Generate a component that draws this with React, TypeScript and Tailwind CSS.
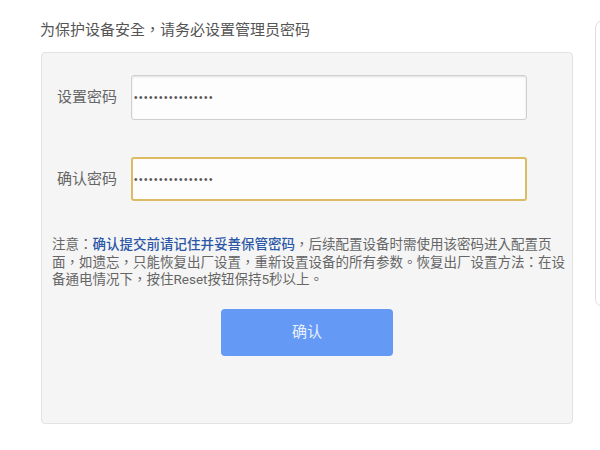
export default function App() {
  return (
    <div className="relative flex w-[600px] h-[450px] items-start overflow-hidden bg-white font-['Roboto','Noto_Sans_CJK_TC',sans-serif]">
      <div className="w-[573px] shrink-0 pl-[40px] pt-[19px]">
        <h1 className="text-[15px] leading-[22px] text-[#555]">
          为保护设备安全，请务必设置管理员密码
        </h1>

        <div className="ml-[1px] mt-[11px] h-[372px] rounded border border-[#e2e2e2] bg-[#f5f5f5] pt-[22px]">
          <PasswordRow label="设置密码" />
          <div className="mt-[37px]">
            <PasswordRow label="确认密码" focused />
          </div>

          <div className="mt-[35px] pl-[10px] text-[13.5px] leading-[17.5px] whitespace-nowrap text-[#666]">
            <p>
              注意：
              <span className="font-medium text-[#2b57a6]">
                确认提交前请记住并妥善保管密码
              </span>
              ，后续配置设备时需使用该密码进入配置页
            </p>
            <p>面，如遗忘，只能恢复出厂设置，重新设置设备的所有参数。恢复出厂设置方法：在设</p>
            <p>备通电情况下，按住Reset按钮保持5秒以上。</p>
          </div>

          <div className="mt-[20px] flex justify-center">
            <button className="h-[47px] w-[172px] rounded bg-[#6499f6] text-[15px] text-[#e9f0fd]">
              确认
            </button>
          </div>
        </div>
      </div>

      <div className="ml-[22px] mt-[20px] h-[287px] w-[40px] shrink-0 rounded-lg border border-[#dedede] bg-white"></div>
    </div>
  );
}

function PasswordRow({ label, focused = false }: { label: string; focused?: boolean }) {
  return (
    <div className="flex items-center">
      <span className="w-[89px] shrink-0 pl-[15px] text-[15px] text-[#666]">{label}</span>
      <div
        className={
          focused
            ? "flex h-[44px] w-[396px] items-center rounded-[3px] border-2 border-[#dcbb62] bg-[#fdfdfd] pl-[1px]"
            : "flex h-[45px] w-[396px] items-center rounded-[3px] border border-[#cfcfcf] bg-[#fdfdfd] pl-[2px] shadow-[inset_0_1px_2px_rgba(0,0,0,0.12)]"
        }
      >
        <span className="text-[10px] tracking-[1.5px] text-[#555] font-['Liberation_Sans',sans-serif]">
          ••••••••••••••••
        </span>
      </div>
    </div>
  );
}
